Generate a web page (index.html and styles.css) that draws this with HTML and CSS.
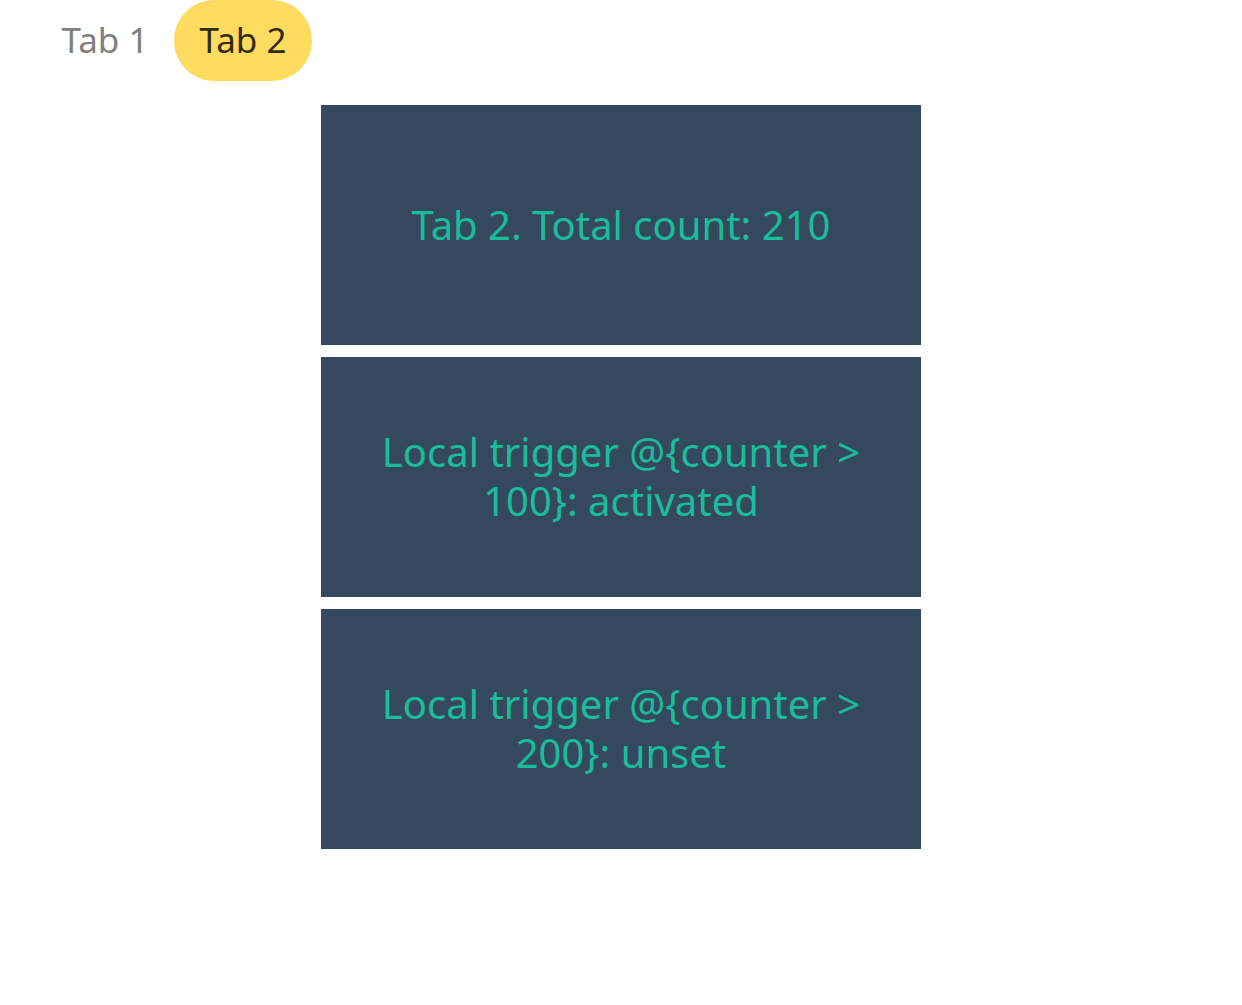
FILE: index.html
```html
<!DOCTYPE html>
<html lang="en">
<head>
<meta charset="utf-8">
<meta name="viewport" content="width=device-width, initial-scale=1">
<title>Tabs</title>
<link rel="stylesheet" href="styles.css">
</head>
<body>
<div class="tabs" role="tablist">
  <button class="tab" type="button" role="tab" id="tab-1" aria-selected="false">Tab 1</button>
  <button class="tab tab-active" type="button" role="tab" id="tab-2" aria-selected="true" aria-controls="panel-2">Tab 2</button>
</div>
<main class="panel" role="tabpanel" id="panel-2" aria-labelledby="tab-2">
  <p class="card">Tab 2. Total count: 210</p>
  <p class="card">Local trigger @{counter &gt; 100}: activated</p>
  <p class="card">Local trigger @{counter &gt; 200}: unset</p>
</main>
</body>
</html>
```
FILE: styles.css
```css
* {
  box-sizing: border-box;
}

body {
  margin: 0;
  background: #fff;
  font-family: "Noto Sans", "Open Sans", sans-serif;
}

.tabs {
  display: flex;
  padding: 0 36px;
}

.tab {
  min-width: 138px;
  border: 0;
  border-radius: 40px;
  padding: 15px 24px 17px;
  background: transparent;
  color: #808080;
  font: inherit;
  font-size: 35px;
  line-height: 49px;
  cursor: pointer;
}

.tab-active {
  background: #ffdb60;
  color: #332c13;
}

.panel {
  display: flex;
  flex-direction: column;
  align-items: center;
  gap: 12px;
  padding: 24px 16px;
}

.card {
  display: flex;
  align-items: center;
  justify-content: center;
  width: 100%;
  max-width: 600px;
  min-height: 240px;
  margin: 0;
  padding: 24px 48px 26px;
  background: #34495e;
  color: #1abc9c;
  font-size: 40px;
  line-height: 49px;
  text-align: center;
}
```
